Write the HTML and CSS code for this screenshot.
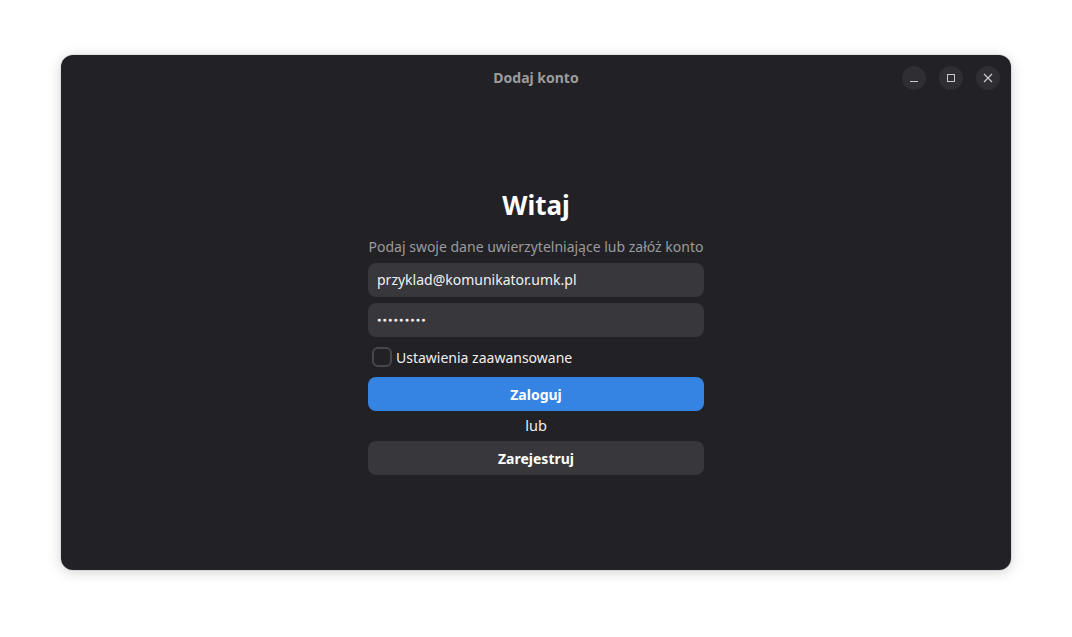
FILE: index.html
```html
<!DOCTYPE html>
<html lang="pl">
<head>
<meta charset="utf-8">
<title>Dodaj konto</title>
<link rel="stylesheet" href="styles.css">
</head>
<body>
<div class="desktop">
  <div class="window">
    <header class="headerbar">
      <div class="title">Dodaj konto</div>
      <div class="controls">
        <button class="wbtn" aria-label="Minimalizuj">
          <svg width="10" height="10" viewBox="0 0 10 10"><path d="M1 8.5h8" stroke="#c8c8ca" stroke-width="1"/></svg>
        </button>
        <button class="wbtn" aria-label="Maksymalizuj">
          <svg width="10" height="10" viewBox="0 0 10 10"><rect x="1.5" y="1.5" width="7" height="7" fill="none" stroke="#c8c8ca" stroke-width="1"/></svg>
        </button>
        <button class="wbtn" aria-label="Zamknij">
          <svg width="10" height="10" viewBox="0 0 10 10"><path d="M1 1L9 9M9 1L1 9" stroke="#c8c8ca" stroke-width="1.2"/></svg>
        </button>
      </div>
    </header>
    <main class="content">
      <div class="form">
        <h1 class="heading">Witaj</h1>
        <p class="subtitle">Podaj swoje dane uwierzytelniające lub załóż konto</p>
        <div class="entry">przyklad@komunikator.umk.pl</div>
        <div class="entry password">●●●●●●●●●</div>
        <label class="check">
          <span class="box"></span>
          <span>Ustawienia zaawansowane</span>
        </label>
        <button class="btn primary">Zaloguj</button>
        <div class="or">lub</div>
        <button class="btn">Zarejestruj</button>
      </div>
    </main>
  </div>
</div>
</body>
</html>
```
FILE: styles.css
```css
* { box-sizing: border-box; }
html, body { margin: 0; padding: 0; background: #ffffff; }
body {
  font-family: "Noto Sans", "Open Sans", sans-serif;
  width: 1072px;
  height: 637px;
  overflow: hidden;
}
.desktop {
  padding: 55px 0 0 61px;
}
.window {
  width: 950px;
  height: 515px;
  background: #222226;
  border-radius: 12px;
  box-shadow: 0 2px 14px rgba(0,0,0,0.18), 0 0 0 1px rgba(0,0,0,0.06);
  display: flex;
  flex-direction: column;
  overflow: hidden;
}
.headerbar {
  height: 46px;
  display: flex;
  align-items: center;
  justify-content: center;
  position: relative;
}
.title {
  color: #9c9c9f;
  font-weight: 700;
  font-size: 14px;
  padding-bottom: 2px;
}
.controls {
  position: absolute;
  right: 11px;
  top: 11px;
  display: flex;
  gap: 13px;
}
.wbtn {
  width: 24px;
  height: 24px;
  border-radius: 50%;
  border: none;
  padding: 0;
  background: #2f2f33;
  display: flex;
  align-items: center;
  justify-content: center;
}
.content {
  flex: 1;
  display: flex;
  justify-content: center;
  padding-top: 86px;
}
.form {
  width: 336px;
  display: flex;
  flex-direction: column;
  align-items: stretch;
}
.heading {
  margin: 0;
  text-align: center;
  color: #ffffff;
  font-size: 26px;
  font-weight: 700;
  line-height: 36px;
}
.subtitle {
  margin: 14px 0 6px;
  text-align: center;
  color: #9a9a9d;
  font-size: 14px;
  line-height: 20px;
}
.entry {
  height: 34px;
  border-radius: 8px;
  background: #38373c;
  color: #f0f0f0;
  font-size: 14px;
  line-height: 34px;
  padding: 0 9px;
  margin-bottom: 6px;
}
.entry.password {
  font-size: 7px;
  letter-spacing: 1.3px;
}
.check {
  display: flex;
  align-items: center;
  gap: 4px;
  height: 28px;
  padding-left: 4px;
  color: #f0f0f0;
  font-size: 14px;
  margin-bottom: 6px;
}
.box {
  width: 20px;
  height: 20px;
  border: 2px solid #47464b;
  border-radius: 6px;
}
.btn {
  height: 34px;
  border: none;
  border-radius: 8px;
  background: #38373c;
  color: #ffffff;
  font-family: inherit;
  font-size: 14px;
  font-weight: 700;
}
.btn.primary { background: #3584e4; }
.or {
  height: 30px;
  line-height: 28px;
  text-align: center;
  color: #ededed;
  font-size: 14.5px;
}
```
